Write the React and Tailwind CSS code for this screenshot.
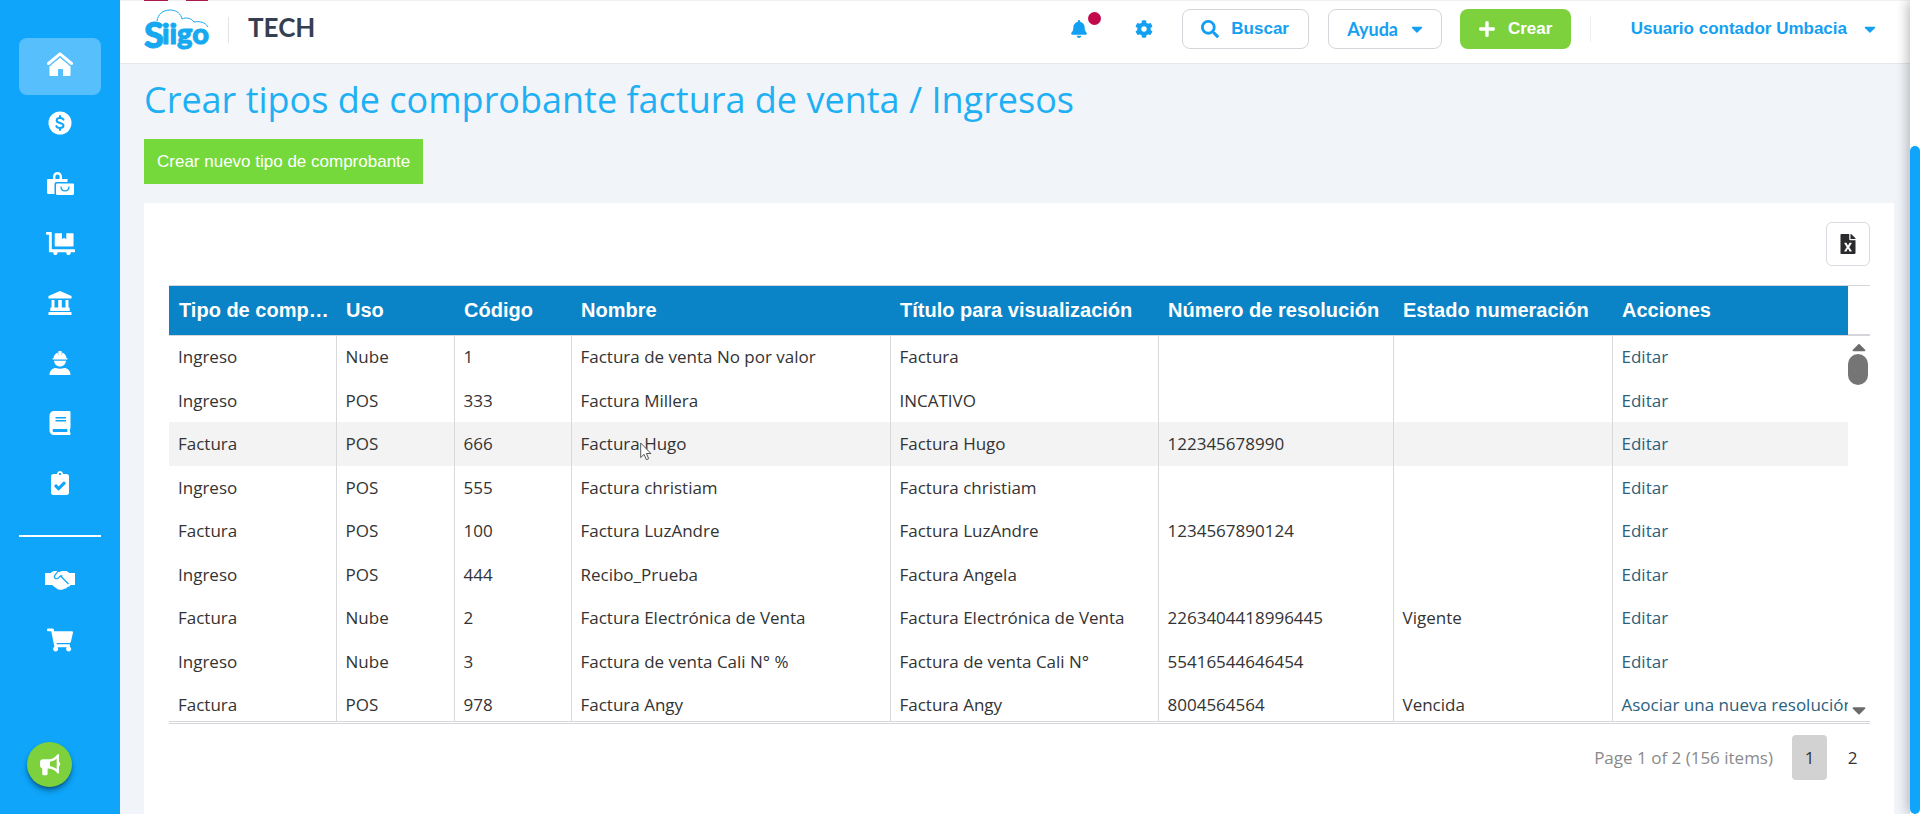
import React, { useState } from "react";
import {
  FaBell,
  FaBook,
  FaCaretDown,
  FaCaretUp,
  FaClipboardCheck,
  FaCog,
  FaDollyFlatbed,
  FaFileExcel,
  FaPlus,
  FaSearch,
  FaShoppingCart,
} from "react-icons/fa";

const rows = [
  ["Ingreso", "Nube", "1", "Factura de venta No por valor", "Factura", "", "", "Editar"],
  ["Ingreso", "POS", "333", "Factura Millera", "INCATIVO", "", "", "Editar"],
  ["Factura", "POS", "666", "Factura Hugo", "Factura Hugo", "122345678990", "", "Editar"],
  ["Ingreso", "POS", "555", "Factura christiam", "Factura christiam", "", "", "Editar"],
  ["Factura", "POS", "100", "Factura LuzAndre", "Factura LuzAndre", "1234567890124", "", "Editar"],
  ["Ingreso", "POS", "444", "Recibo_Prueba", "Factura Angela", "", "", "Editar"],
  ["Factura", "Nube", "2", "Factura Electrónica de Venta", "Factura Electrónica de Venta", "2263404418996445", "Vigente", "Editar"],
  ["Ingreso", "Nube", "3", "Factura de venta Cali N° %", "Factura de venta Cali N°", "55416544646454", "", "Editar"],
  ["Factura", "POS", "978", "Factura Angy", "Factura Angy", "8004564564", "Vencida", "Asociar una nueva resolución"],
];

const columns = [
  { title: "Tipo de comprobante", width: "w-[167px]" },
  { title: "Uso", width: "w-[118px]" },
  { title: "Código", width: "w-[117px]" },
  { title: "Nombre", width: "w-[319px]" },
  { title: "Título para visualización", width: "w-[268px]" },
  { title: "Número de resolución", width: "w-[235px]" },
  { title: "Estado numeración", width: "w-[219px]" },
  { title: "Acciones", width: "" },
];

function HomeIcon() {
  return (
    <svg width="26" height="24" viewBox="0 0 26 24" fill="none">
      <path d="M13 5.500 23.500 14.200V23a1 1 0 0 1-1 1H16v-7h-5v7H3.500a1 1 0 0 1-1-1v-8.800Z" fill="white" />
      <path d="M2 13.500 13 4.200l11 9.300" stroke="#57bffc" strokeWidth="2" />
      <path d="M1.500 11.500 13 1.800l11.500 9.700" stroke="white" strokeWidth="3" strokeLinecap="round" strokeLinejoin="round" />
    </svg>
  );
}

function DollarIcon() {
  return (
    <svg width="24" height="24" viewBox="0 0 24 24" fill="none">
      <circle cx="12" cy="12" r="11.500" fill="white" />
      <path
        d="M15.500 8.600C15 7.500 13.700 7 12 7 10 7 8.700 7.900 8.700 9.400c0 3.400 6.800 1.800 6.800 5.200 0 1.500-1.400 2.400-3.500 2.400-1.900 0-3.200-.7-3.700-1.900M12 5v2m0 10v2"
        stroke="#0ea5fa"
        strokeWidth="2"
        strokeLinecap="round"
      />
    </svg>
  );
}

function BagsIcon() {
  return (
    <svg width="27" height="23" viewBox="0 0 27 23" fill="none">
      <path d="M7.200 8V4.500a3.300 3.300 0 0 1 6.600 0V8" stroke="white" strokeWidth="2.400" />
      <path d="M1 7h19.500v3H9.500a2 2 0 0 0-2 2v10H1.500a1.500 1.500 0 0 1-1.500-1.500V8a1 1 0 0 1 1-1Z" fill="white" />
      <path d="M10 11.500h16a1 1 0 0 1 1 1v9a1.500 1.500 0 0 1-1.500 1.500h-15A1.500 1.500 0 0 1 9 21.500v-9a1 1 0 0 1 1-1Z" fill="white" />
      <path d="M14 14.500c0 2.700 1.600 4.300 4 4.300s4-1.600 4-4.300" stroke="#0ea5fa" strokeWidth="1.300" />
    </svg>
  );
}

function BankIcon() {
  return (
    <svg width="24" height="24" viewBox="0 0 24 24" fill="white">
      <path d="M12 0 23.500 5v2.500H.5V5Z" />
      <path d="M3.500 9h3v7.500h3.700V9h3.600v7.500h3.700V9h3v7.500h1.200V20H2.300v-3.500h1.200Z" />
      <path d="M.5 21h23v3H.5Z" />
    </svg>
  );
}

function WorkerIcon() {
  return (
    <svg width="22" height="24" viewBox="0 0 22 24" fill="white">
      <path d="M4.500 8.500H4a.6.6 0 0 1 0-1.200h.5C4.700 4.500 6.300 2.300 8.500 1.400L9.300 4.500V.6C9.300.2 9.600 0 10 0h2c.4 0 .7.200.7.6v3.900l.8-3.100c2.200.9 3.800 3.100 4 5.900h.5a.6.6 0 0 1 0 1.200Z" />
      <path d="M5 9.800h12c-.3 3.300-2.800 5.800-6 5.800S5.300 13.100 5 9.800Z" />
      <path d="M.5 24c0-4.300 2.800-7 6.500-7 1.200.5 2.500.8 4 .8s2.800-.3 4-.8c3.700 0 6.500 2.700 6.500 7Z" />
    </svg>
  );
}

function HandshakeIcon() {
  return (
    <svg width="30" height="20" viewBox="0 0 30 20" fill="none">
      <path
        d="M0 3h5.500L8.500 1h13l3 2H30v12h-4.500l-1 1.500-2 .5-1.500 1.500-2 .3-1.500 1h-3.500l-2-1-5-3.800H0Z"
        fill="white"
      />
      <path
        d="M15.500 1.500h-2.800L9.500 5.800c-1 2 1.400 3.600 3.300 2.600l2.700-2.500h2M15.500 6l8 8"
        stroke="#0ea5fa"
        strokeWidth="1.200"
      />
    </svg>
  );
}

function MegaphoneIcon() {
  return (
    <svg width="22" height="22" viewBox="0 0 22 22" fill="white">
      <path
        fillRule="evenodd"
        d="M20 1c0-.8-1-1.200-1.500-.6C16.500 3 13.500 5.300 9.500 5.300H4A3 3 0 0 0 1 8.300v3.200c0 1.400.9 2.500 2.200 2.800V20c0 .7.500 1.200 1.200 1.200h3c.7 0 1.200-.5 1.200-1.200v-5.600h1c4 0 7 2.300 8.900 4.900.5.6 1.500.3 1.500-.6v-6.500c.8-.3 1.200-1.200 1.200-2.200s-.4-1.900-1.200-2.200Zm-2.300 3.700v10.400c-2-1.600-4.300-2.600-6.700-2.900V7.600c2.400-.3 4.700-1.300 6.700-2.900Z"
      />
    </svg>
  );
}

function Logo() {
  return (
    <svg width="66" height="42" viewBox="0 0 66 42" role="img" aria-label="Siigo" className="overflow-visible">
      <path
        d="M13 12C14 5 19 1 26 1c7 0 11 4 12 9 4-2 9-1 12 3 6-1 11 0 14 5"
        fill="none"
        stroke="#17a9f0"
        strokeWidth="1"
      />
      <g fill="#17a9f0" stroke="#17a9f0" strokeWidth="1" fontFamily="Lato" fontWeight="900">
        <text x="0" y="39" fontSize="36">S</text>
        <text x="18" y="35" fontSize="29">iigo</text>
      </g>
    </svg>
  );
}

const menu = [
  { label: "Ventas", icon: <DollarIcon /> },
  { label: "Compras", icon: <BagsIcon /> },
  { label: "Inventario", icon: <FaDollyFlatbed size={29} /> },
  { label: "Bancos", icon: <BankIcon /> },
  { label: "Nómina", icon: <WorkerIcon /> },
  { label: "Contabilidad", icon: <FaBook size={24} /> },
  { label: "Tareas", icon: <FaClipboardCheck size={24} /> },
];

function Sidebar() {
  return (
    <nav className="flex h-screen w-[120px] shrink-0 flex-col bg-[#0ea5fa] px-[19px] pt-[38px] pb-[27px] text-white">
      <a href="#inicio" aria-label="Inicio" className="flex h-[57px] shrink-0 items-center justify-center rounded-lg bg-[#57bffc] pb-1.5">
        <HomeIcon />
      </a>
      {menu.map((item) => (
        <a key={item.label} href="#menu" aria-label={item.label} className="flex h-[60px] shrink-0 items-center justify-center pb-1">
          {item.icon}
        </a>
      ))}
      <hr className="mt-5 border-t-2 border-white" />
      <a href="#aliados" aria-label="Aliados" className="mt-[13px] flex h-[60px] items-center justify-center">
        <HandshakeIcon />
      </a>
      <a href="#tienda" aria-label="Tienda" className="flex h-[60px] items-center justify-center">
        <FaShoppingCart size={26} />
      </a>
      <button
        type="button"
        aria-label="Novedades"
        className="mt-auto ml-2 flex size-[45px] shrink-0 items-center justify-center rounded-full bg-[#7dd13d] shadow-md shadow-black/40"
      >
        <MegaphoneIcon />
      </button>
    </nav>
  );
}

function Header() {
  return (
    <header className="border-b border-[#e3e7ec] bg-white">
      <div className="flex h-px bg-[#f3f1f4] pl-6">
        <span className="w-6 bg-[#a81a4a]" />
        <span className="ml-[18px] w-[22px] bg-[#a81a4a]" />
      </div>
      <div className="flex h-[62px] items-start pt-2 pr-[31px] pl-6">
        <Logo />
        <div className="mt-2 ml-[18px] h-[26px] w-px bg-[#e2e4e8]" />
        <span className="ml-[19px] font-['Lato'] text-[26px] leading-9 font-bold text-[#363f52]">TECH</span>

        <div className="ml-auto flex h-10 items-center font-['Liberation_Sans'] text-[17px] font-bold text-[#14a0f2]">
          <button type="button" aria-label="Notificaciones" className="relative">
            <FaBell size={18} />
            <span className="absolute -top-2 left-[18px] size-[13px] rounded-full bg-[#c1084a]" />
          </button>
          <button type="button" aria-label="Configuración" className="ml-[47px]">
            <FaCog size={18} />
          </button>
          <button type="button" className="ml-[29px] flex h-10 w-[127px] items-center justify-center gap-3 rounded-lg border border-[#d5d5dc]">
            <FaSearch size={18} />
            Buscar
          </button>
          <button type="button" className="ml-[19px] flex h-10 w-[114px] items-center justify-center gap-2.5 rounded-lg border border-[#d5d5dc] pl-1 font-['Lato'] text-lg">
            Ayuda
            <FaCaretDown size={18} />
          </button>
          <button type="button" className="ml-[18px] flex h-10 w-[111px] items-center justify-center gap-3 rounded-lg bg-[#7dd13d] text-white">
            <FaPlus size={18} />
            Crear
          </button>
          <div className="ml-[19px] h-[26px] w-px bg-[#edeef0]" />
          <button type="button" className="ml-10 flex items-center gap-3.5">
            Usuario contador Umbacia
            <FaCaretDown size={18} />
          </button>
        </div>
      </div>
    </header>
  );
}

function VoucherTable() {
  return (
    <div className="flex h-[439px] border-t border-b border-[#d6d6da]">
      <div className="mb-px min-w-0 flex-1 overflow-hidden border-b border-[#d6d6da]">
        <table className="w-full table-fixed border-collapse text-left font-['Open_Sans'] text-[17px] text-[#333]">
          <thead>
            <tr className="h-[49px] border-b border-[#d6d6da] bg-[#0a84c6] font-['Liberation_Sans'] text-xl text-white">
              {columns.map((col) => (
                <th key={col.title} className={`truncate pr-1 pl-2.5 font-bold ${col.width}`}>
                  {col.title}
                </th>
              ))}
            </tr>
          </thead>
          <tbody>
            {rows.map((row, i) => (
              <tr key={i} className="odd:h-11 even:h-[43px] hover:bg-[#f3f3f4] nth-3:bg-[#f3f3f4]">
                {row.map((cell, j) => (
                  <td key={j} className="overflow-hidden border-r border-[#d9d9dc] pl-[9px] leading-6 whitespace-nowrap last:border-r-0">
                    {j === 7 ? <a href="#editar" className="text-[#2a5f7e]">{cell}</a> : cell}
                  </td>
                ))}
              </tr>
            ))}
          </tbody>
        </table>
      </div>
      {/* Scroll column */}
      <div className="mb-px flex w-[22px] shrink-0 flex-col border-b border-[#d6d6da] text-[#6b6b6b]">
        <div className="h-[50px] border-b-2 border-[#d6d6da]" />
        <FaCaretUp size={22} />
        <div className="-mt-1 h-[31px] w-5 rounded-full bg-[#757575]" />
        <FaCaretDown size={22} className="mt-auto" />
      </div>
    </div>
  );
}

// Mouse pointer resting over the highlighted row
function Pointer() {
  return (
    <svg width="12" height="19" viewBox="0 0 12 19" className="absolute top-[442px] left-[640px]">
      <path d="M.7 1v14.500l3.400-3.200 2.300 5.400 2.300-1-2.300-5.200h4.500Z" fill="white" stroke="#555" strokeWidth="1" />
    </svg>
  );
}

export default function App() {
  const [page, setPage] = useState(1);

  return (
    <div className="relative flex h-screen overflow-hidden bg-[#f1f5f9] font-['Open_Sans']">
      <Sidebar />

      <div className="flex min-w-0 flex-1 flex-col">
        <Header />
        <main className="flex flex-1 flex-col items-start px-6 pt-3 pr-4">
          <h1 className="text-[36px] leading-[48px] text-[#1fb0f3]">
            Crear tipos de comprobante factura de venta / Ingresos
          </h1>
          <button type="button" className="mt-[15px] h-[45px] bg-[#75d93b] px-[13px] font-['Liberation_Sans'] text-[17px] text-white">
            Crear nuevo tipo de comprobante
          </button>

          <section className="mt-[19px] w-full flex-1 bg-white px-6 pt-[19px] pl-[25px]">
            <div className="mb-[19px] flex justify-end">
              <button type="button" aria-label="Exportar a Excel" className="flex size-11 items-center justify-center rounded-md border border-[#d9dbe2] text-[#2b2b2e]">
                <FaFileExcel size={20} />
              </button>
            </div>
            <VoucherTable />
            <div className="mt-[11px] flex h-[45px] items-center justify-end text-[17px] text-[#333]">
              <span className="mr-[19px] text-[#8a8a8a]">Page {page} of 2 (156 items)</span>
              {[1, 2].map((n) => (
                <button
                  key={n}
                  type="button"
                  onClick={() => setPage(n)}
                  className={`h-[45px] w-[35px] rounded-sm ${n === page ? "mr-2 bg-[#d2d2d2]" : ""}`}
                >
                  {n}
                </button>
              ))}
            </div>
          </section>
        </main>
      </div>

      {/* Page scrollbar */}
      <div className="relative flex w-2.5 shrink-0 flex-col bg-white pt-[146px] shadow-[0_0_14px_rgba(0,0,0,0.4)]">
        <div className="flex-1 rounded-full bg-[#0ea5fa]" />
      </div>
      <Pointer />
    </div>
  );
}
